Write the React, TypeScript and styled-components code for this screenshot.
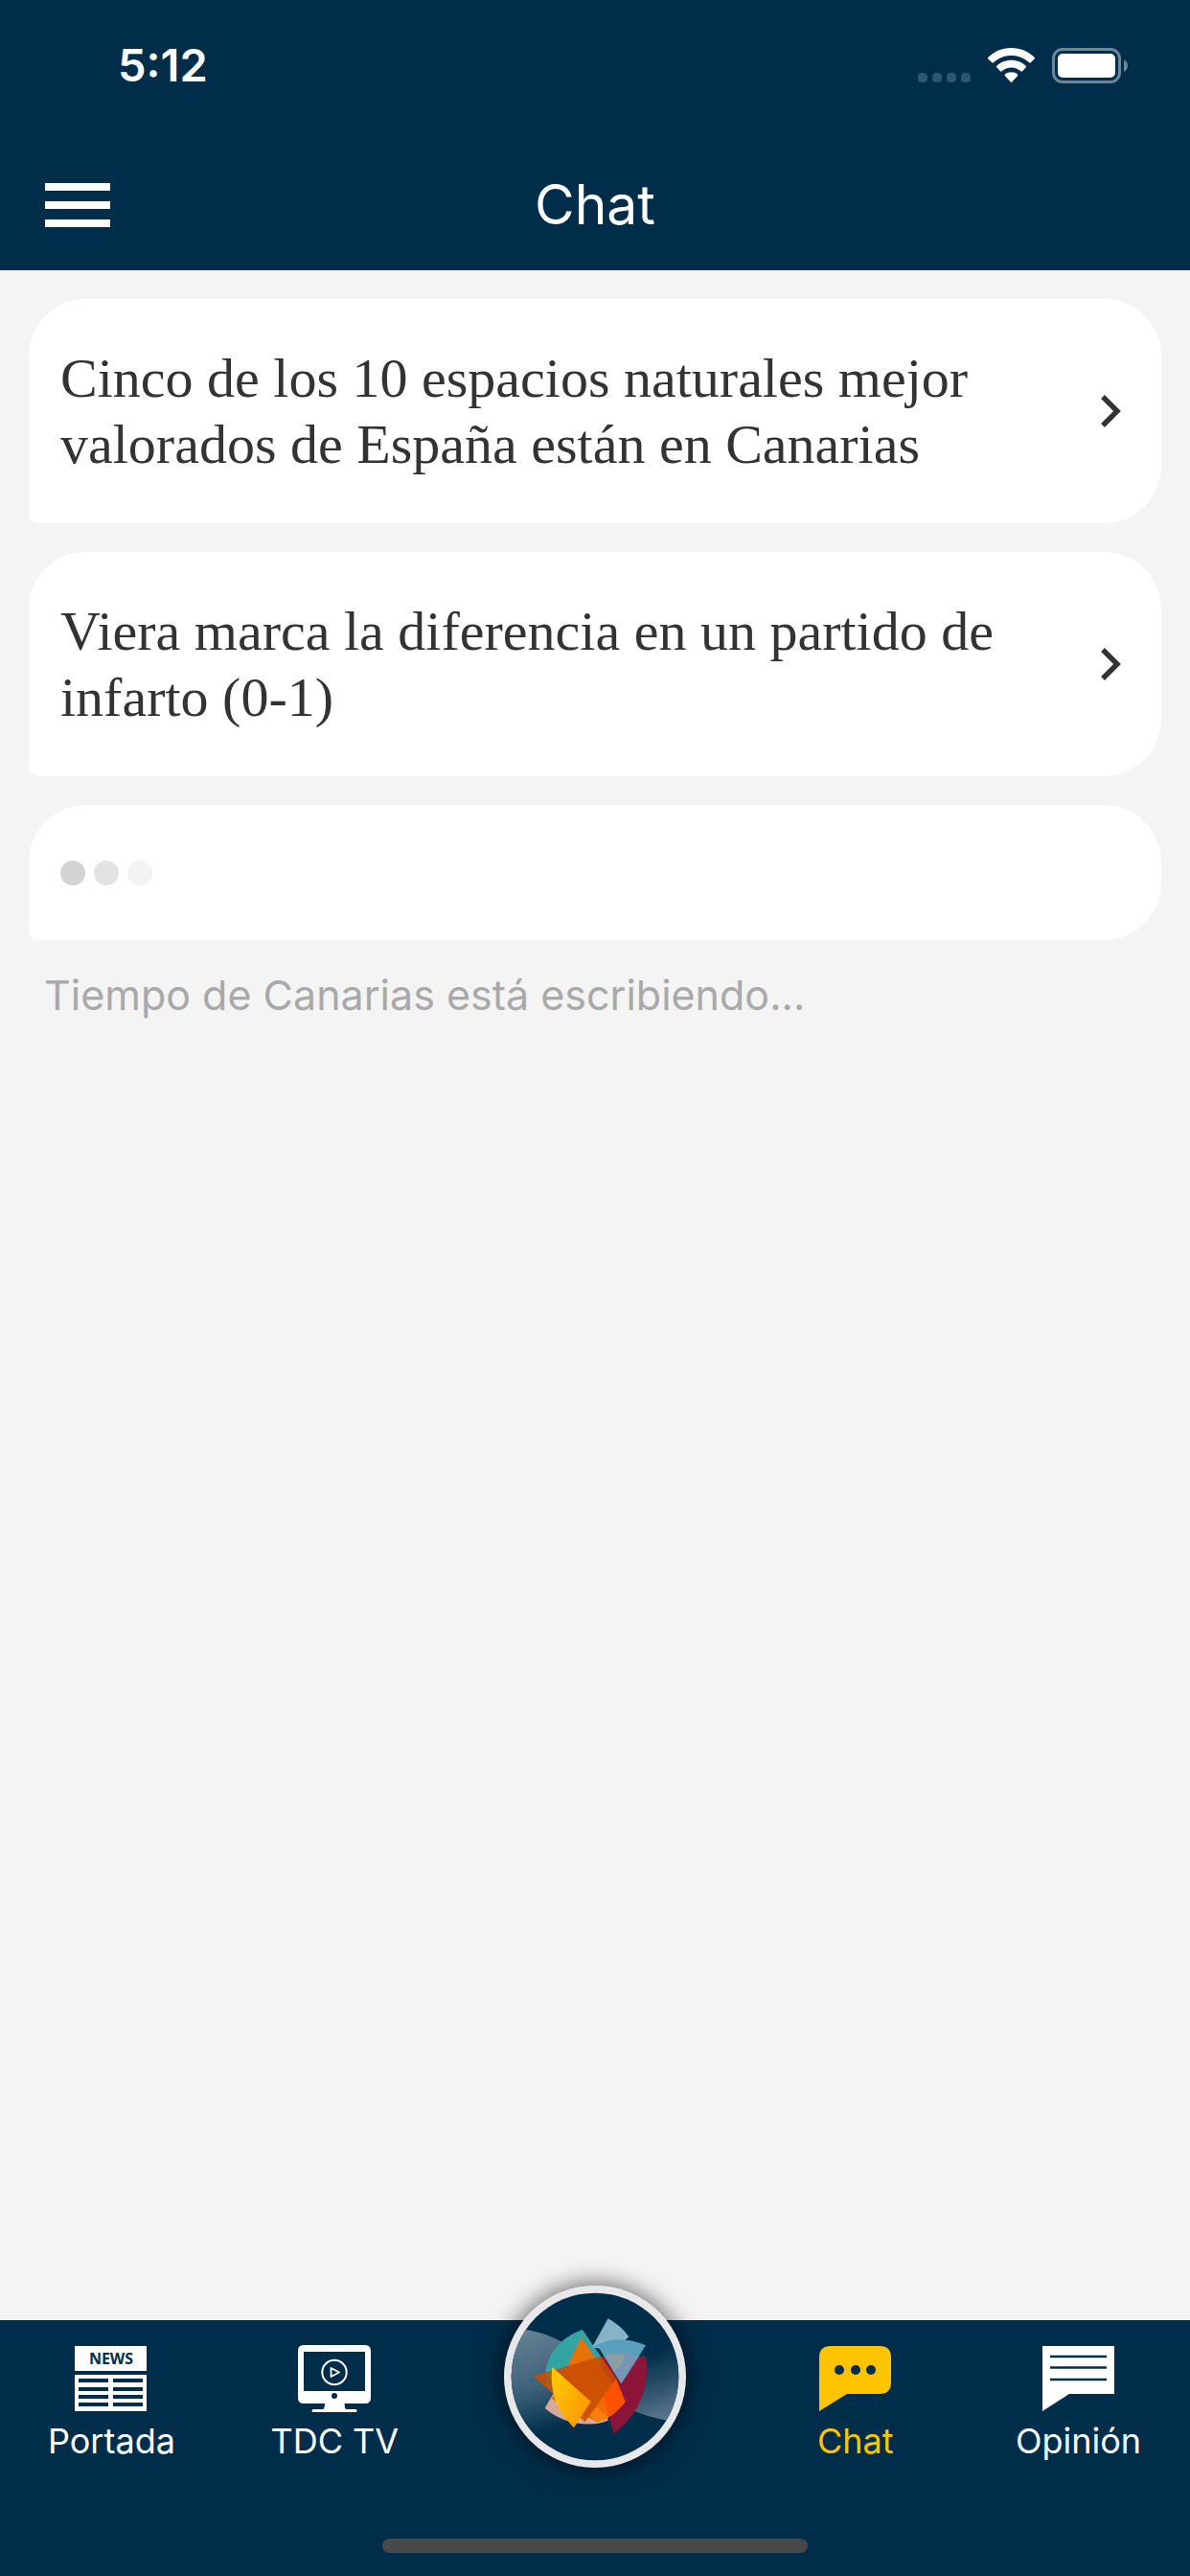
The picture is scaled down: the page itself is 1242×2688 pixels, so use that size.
import React from 'react';
import styled, { createGlobalStyle } from 'styled-components';

const navy = '#002d4a';
const sans = "Inter, 'Liberation Sans', sans-serif";
const serif = "'Liberation Serif', 'Times New Roman', serif";

const GlobalStyle = createGlobalStyle`
  *, *::before, *::after { box-sizing: border-box; }
  body { margin: 0; background: #f4f4f4; font-family: ${sans}; }
  button { border: 0; padding: 0; background: none; font: inherit; cursor: pointer; }
  a { color: inherit; text-decoration: none; }
  svg { display: block; flex-shrink: 0; }
`;

const Screen = styled.div`
  display: flex;
  flex-direction: column;
  min-height: 100vh;
`;

const Header = styled.header`
  background: ${navy};
  color: #fff;
`;

const StatusBar = styled.div`
  display: flex;
  justify-content: space-between;
  align-items: center;
  height: 136px;
  padding: 0 64px 0 123px;
`;

const Time = styled.time`
  font-size: 47px;
  font-weight: 600;
  line-height: 56px;
`;

const StatusIcons = styled.div`
  display: flex;
  align-items: center;
  gap: 18px;
`;

const TitleBar = styled.div`
  display: grid;
  grid-template-columns: 1fr auto 1fr;
  align-items: center;
  height: 146px;
  padding: 10px 47px 0;
`;

const MenuButton = styled.button`
  display: flex;
  flex-direction: column;
  gap: 11px;
  width: 68px;
`;

const MenuLine = styled.span`
  width: 100%;
  height: 8px;
  background: #fff;
`;

const Title = styled.h1`
  margin: 0;
  font-size: 57px;
  font-weight: 400;
  line-height: 72px;
`;

const Main = styled.main`
  flex: 1;
  padding: 30px;
`;

const MessageList = styled.ul`
  display: flex;
  flex-direction: column;
  gap: 30px;
  margin: 0;
  padding: 0;
  list-style: none;
`;

const Bubble = styled.div`
  display: flex;
  align-items: center;
  background: #fff;
  border-radius: 60px 60px 60px 9px;
`;

const MessageLink = styled(Bubble).attrs({ as: 'a' })<{ href?: string }>`
  justify-content: space-between;
  gap: 60px;
  padding: 48px 42px 48px 33px;
`;

const Headline = styled.span`
  color: #333;
  font-family: ${serif};
  font-size: 58px;
  line-height: 69px;
`;

const TypingBubble = styled(Bubble)`
  gap: 9px;
  height: 141px;
  padding: 0 33px;
`;

const TypingDot = styled.span<{ $tone: string }>`
  width: 26px;
  height: 26px;
  border-radius: 50%;
  background: ${(p) => p.$tone};
`;

const TypingNote = styled.p`
  margin: 0;
  padding: 29px 16px;
  color: #a9a9a9;
  font-size: 43px;
  line-height: 56px;
`;

const TabBar = styled.nav`
  display: flex;
  align-items: flex-start;
  height: 267px;
  background: ${navy};
  color: #fff;
`;

const Footer = styled.footer`
  position: relative;
`;

const Tab = styled.a<{ $active?: boolean }>`
  flex: 3;
  display: flex;
  flex-direction: column;
  align-items: center;
  gap: 8px;
  padding-top: 26px;
  color: ${(p) => (p.$active ? '#ffc400' : '#fff')};
  font-size: 36px;
  line-height: 44px;
`;

const LogoSlot = styled.div`
  flex: 4;
  display: flex;
  justify-content: center;
`;

const LogoButton = styled.button`
  width: 190px;
  height: 190px;
  margin-top: -36px;
  border-radius: 50%;
  box-shadow: 0 0 24px 2px rgba(0, 0, 0, 0.6);
`;

const HomeIndicator = styled.div`
  position: absolute;
  bottom: 24px;
  left: 50%;
  width: 444px;
  height: 15px;
  margin-left: -222px;
  border-radius: 8px;
  background: #484848;
`;

const Signal = () => (
  <svg width="55" height="37" viewBox="0 0 55 37" fill="#2a5873" aria-hidden="true">
    {[0, 15, 30, 45].map((x) => (
      <rect key={x} x={x} y="26" width="10" height="10" rx="4" />
    ))}
  </svg>
);

const Wifi = () => (
  <svg width="49" height="37" viewBox="0 0 49 37" fill="#fff" aria-hidden="true">
    <path d="M24.500 0C34 0 42.500 3.700 48.600 9.800Q49.400 10.700 48.600 11.500L44.800 15.300Q44 16 43.200 15.300C38.200 10.600 31.700 8 24.500 8S10.800 10.600 5.800 15.300Q5 16 4.200 15.300L.4 11.500Q-.4 10.700 .4 9.800C6.500 3.700 15 0 24.500 0Z" />
    <path d="M24.500 12.700C30.500 12.700 35.800 15 39.800 18.700Q40.600 19.500 39.800 20.300L36 24.300Q35.200 25 34.400 24.300C31.700 22 28.300 20.500 24.500 20.500S17.300 22 14.600 24.300Q13.800 25 13 24.300L9.200 20.300Q8.400 19.500 9.200 18.700C13.200 15 18.500 12.700 24.500 12.700Z" />
    <path d="M24.500 25.300C27 25.300 29.300 26.100 31 27.500Q31.900 28.300 31 29.200L25.300 35.400Q24.500 36.200 23.700 35.400L18 29.200Q17.100 28.300 18 27.500C19.700 26.100 22 25.300 24.500 25.300Z" />
  </svg>
);

const Battery = () => (
  <svg width="80" height="37" viewBox="0 0 80 37" aria-hidden="true">
    <rect x="1.500" y="1.500" width="69" height="34" rx="9.500" fill="none" stroke="#6a8799" strokeWidth="3" />
    <rect x="6" y="6" width="60" height="25" rx="5" fill="#fff" />
    <path d="M75 12.500C77.500 13.500 79 15.800 79 18.500S77.500 24 75 25Z" fill="#6a8799" />
  </svg>
);

const Chevron = () => (
  <svg width="21" height="34" viewBox="0 0 21 34" aria-hidden="true">
    <path d="M2 2L17 17L2 32" fill="none" stroke="#333" strokeWidth="5.500" />
  </svg>
);

const NewsIcon = () => (
  <svg width="76" height="70" viewBox="0 0 76 70" aria-hidden="true">
    <path d="M0 1H75V27H0ZM0 31H75V69H0Z" fill="#fff" />
    {[35, 44, 52, 60].map((y) => (
      <path key={y} d={`M4 ${y}H35V${y + 4}H4ZM40 ${y}H71V${y + 4}H40Z`} fill={navy} />
    ))}
    <text x="38" y="20" textAnchor="middle" fill={navy} fontFamily="'Open Sans', sans-serif" fontWeight="700" fontSize="16">
      NEWS
    </text>
  </svg>
);

const TvIcon = () => (
  <svg width="76" height="70" viewBox="0 0 76 70" aria-hidden="true">
    <path
      fillRule="evenodd"
      fill="#fff"
      d="M6 0H70Q76 0 76 6V55Q76 61 70 61H48.500Q48.500 65 50 67H60Q61.500 67 61.500 68.500T60 70H16Q14.500 70 14.500 68.500T16 67H26.500Q28 65 28 61H6Q0 61 0 55V6Q0 0 6 0ZM6 7V48H70V7Z"
    />
    <circle cx="38" cy="53" r="3" fill={navy} />
    <circle cx="38" cy="28.500" r="12.700" fill="none" stroke="#fff" strokeWidth="2" />
    <path d="M34.500 24V33L43 28.500Z" fill="none" stroke="#fff" strokeWidth="1.800" strokeLinejoin="round" />
  </svg>
);

const ChatIcon = () => (
  <svg width="76" height="70" viewBox="0 0 76 70" aria-hidden="true">
    <path d="M0 69V13Q0 1 12 1H63Q75 1 75 13V39Q75 51 63 51H29Z" fill="#ffc400" />
    {[21, 38, 54].map((x) => (
      <circle key={x} cx={x} cy="26" r="5" fill={navy} />
    ))}
  </svg>
);

const OpinionIcon = () => (
  <svg width="76" height="70" viewBox="0 0 76 70" aria-hidden="true">
    <path d="M0 69V1H75V51H28Z" fill="#fff" />
    <path d="M8 12H67M8 23.500H67M8 36H67" stroke={navy} strokeWidth="2.500" />
  </svg>
);

const Logo = () => (
  <svg width="190" height="190" viewBox="76 75 570 570" aria-hidden="true">
    <defs>
      <linearGradient id="sweepLeft" gradientUnits="userSpaceOnUse" x1="140" y1="220" x2="230" y2="530">
        <stop offset="0" stopColor="#667f92" />
        <stop offset="0.550" stopColor="#3c6279" />
        <stop offset="1" stopColor={navy} />
      </linearGradient>
      <linearGradient id="sweepRight" gradientUnits="userSpaceOnUse" x1="520" y1="290" x2="590" y2="490">
        <stop offset="0" stopColor={navy} />
        <stop offset="0.500" stopColor="#2a5069" />
        <stop offset="1" stopColor="#5d788c" />
      </linearGradient>
      <linearGradient id="yellow" gradientUnits="userSpaceOnUse" x1="230" y1="400" x2="335" y2="450">
        <stop offset="0" stopColor="#ffc400" />
        <stop offset="1" stopColor="#ff9c00" />
      </linearGradient>
      <clipPath id="disc">
        <circle cx="361" cy="360" r="262" />
      </clipPath>
    </defs>
    <circle cx="361" cy="360" r="285" fill="#e8e8ea" />
    <circle cx="361" cy="360" r="262" fill={navy} />
    <g clipPath="url(#disc)">
      <path d="M90 208C180 210 230 235 290 268L320 460L190 560L90 500Z" fill="url(#sweepLeft)" />
      <path d="M640 230L500 260L400 420C470 470 530 490 640 506Z" fill="url(#sweepRight)" />
    </g>
    <path d="M322 213C255 235 209 290 206 352L300 400L420 366L380 298Z" fill="#33a3a4" />
    <path d="M250 380L204 458C255 505 340 522 402 497L390 420Z" fill="#d6aa98" />
    <path d="M380 297H520C535 385 500 480 420 538L380 400Z" fill="#8a1538" />
    <path d="M402 178Q442 200 467 235L420 280L352 268Z" fill="#85b4c8" />
    <path d="M352 268Q430 222 520 262L443 382L372 268Z" fill="#5aa0be" />
    <path d="M387 292Q445 280 500 294L443 382Z" fill="#7796b5" />
    <path d="M395 292Q430 284 455 294Q450 322 420 345Z" fill="#8ba0a3" />
    <path d="M318 236L456 438Q422 485 370 503L225 430Z" fill="#e57304" />
    <path d="M167 358L380 296L427 366L330 502Z" fill="#ca4c02" fillOpacity="0.880" />
    <path d="M205 352L226 343V403L205 388Z" fill="#9a6a2c" fillOpacity="0.500" />
    <path d="M427 366L456 438Q435 467 404 486L388 424Z" fill="#ff5200" />
    <path d="M365 455L404 486Q390 497 370 503L345 481Z" fill="#ff7f0e" />
    <path d="M388 424L404 486L365 455Z" fill="#f06a08" />
    <path d="M227 330L348 438L295 520C240 465 218 405 227 330Z" fill="url(#yellow)" />
  </svg>
);

const messages = [
  'Cinco de los 10 espacios naturales mejor valorados de España están en Canarias',
  'Viera marca la diferencia en un partido de infarto (0-1)',
];

const typingTones = ['#d3d3d3', '#e3e3e3', '#f3f3f3'];

export default function App() {
  return (
    <Screen>
      <GlobalStyle />
      <Header>
        <StatusBar>
          <Time>5:12</Time>
          <StatusIcons>
            <Signal />
            <Wifi />
            <Battery />
          </StatusIcons>
        </StatusBar>
        <TitleBar>
          <MenuButton aria-label="Menú">
            <MenuLine />
            <MenuLine />
            <MenuLine />
          </MenuButton>
          <Title>Chat</Title>
        </TitleBar>
      </Header>
      <Main>
        <MessageList>
          {messages.map((text) => (
            <li key={text}>
              <MessageLink href="#noticia">
                <Headline>{text}</Headline>
                <Chevron />
              </MessageLink>
            </li>
          ))}
          <li>
            <TypingBubble>
              {typingTones.map((tone) => (
                <TypingDot key={tone} $tone={tone} />
              ))}
            </TypingBubble>
          </li>
        </MessageList>
        <TypingNote>Tiempo de Canarias está escribiendo...</TypingNote>
      </Main>
      <Footer>
        <TabBar>
          <Tab href="#portada">
            <NewsIcon />
            Portada
          </Tab>
          <Tab href="#tv">
            <TvIcon />
            TDC TV
          </Tab>
          <LogoSlot>
            <LogoButton aria-label="Inicio">
              <Logo />
            </LogoButton>
          </LogoSlot>
          <Tab href="#chat" $active aria-current="page">
            <ChatIcon />
            Chat
          </Tab>
          <Tab href="#opinion">
            <OpinionIcon />
            Opinión
          </Tab>
        </TabBar>
        <HomeIndicator />
      </Footer>
    </Screen>
  );
}
